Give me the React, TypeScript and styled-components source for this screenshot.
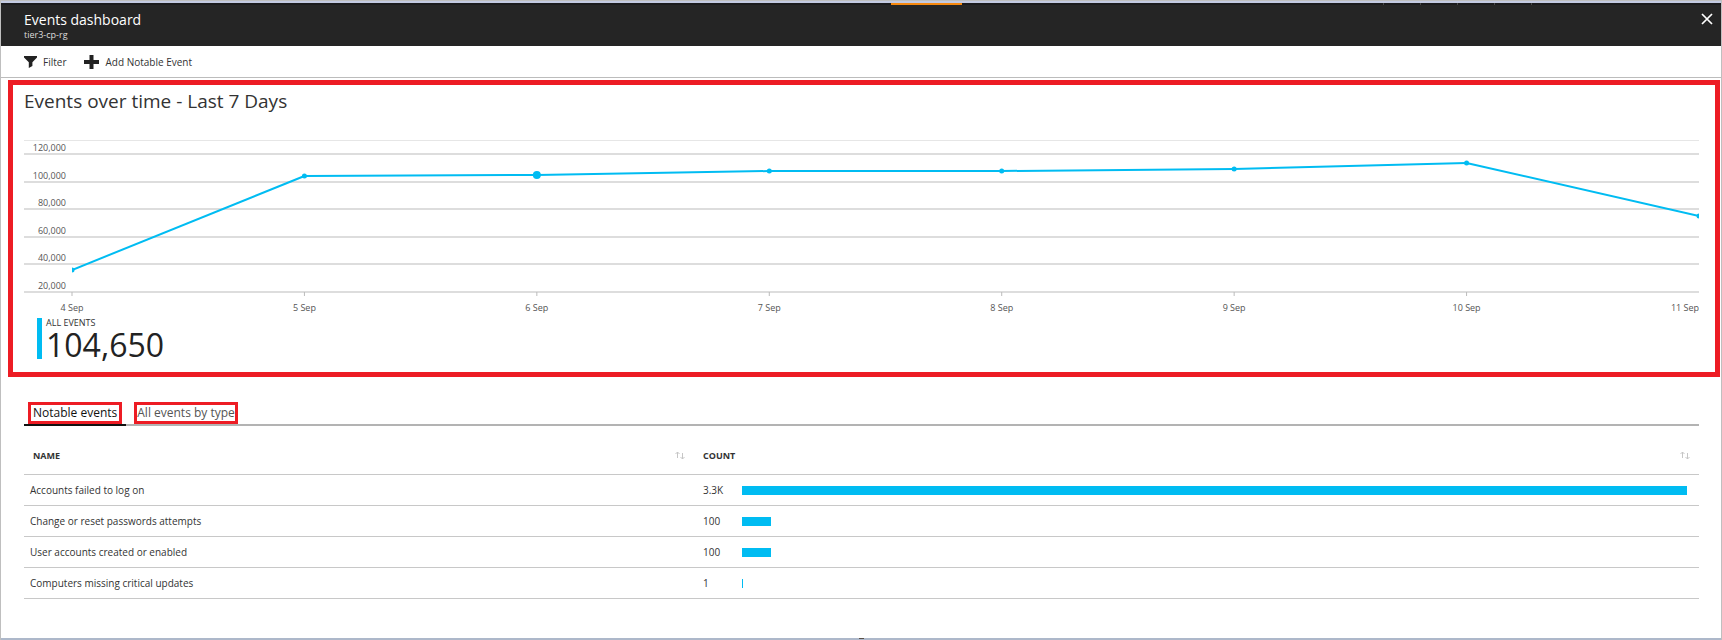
import React from "react";
import styled, { createGlobalStyle } from "styled-components";

const accent = "#00bcf2";
const red = "#ed1c24";
const rule = "#c8c8c8";

const GlobalStyle = createGlobalStyle`
  * { box-sizing: border-box; }
  body {
    margin: 0;
    background: #fff;
    color: #333;
    font-family: "Open Sans", "Noto Sans", sans-serif;
    font-size: 10px;
    line-height: 16px;
  }
  button {
    font: inherit;
    color: inherit;
    background: none;
    border: 0;
    padding: 0;
    cursor: pointer;
  }
`;

const Blade = styled.div`
  min-height: 100vh;
  display: flex;
  flex-direction: column;
  border: solid #bfbfbf;
  border-width: 1px 1px 0;
`;

const TopEdge = styled.div`
  height: 4px;
  display: grid;
  grid-template-columns: 890fr 71fr 421fr 37fr 37fr 37fr 37fr 190fr;
  border-top: 2px solid #c3cae2;
  background: #1b1b1d;
`;

const EdgeMark = styled.span<{ $active?: boolean }>`
  background: ${(p) => (p.$active ? "#f7890f" : "transparent")};
  border-left: ${(p) => (p.$active ? "0" : "1px solid #4a4a4a")};
`;

const Header = styled.header`
  display: flex;
  justify-content: space-between;
  align-items: flex-start;
  height: 41px;
  padding: 5px 8px 0 23px;
  background: #252525;
  color: #fff;
`;

const HeaderTitle = styled.h1`
  margin: 0;
  font-size: 14px;
  line-height: 20px;
  font-weight: 400;
`;

const HeaderSubtitle = styled.p`
  margin: 0;
  font-size: 9px;
  line-height: 10px;
  color: #ddd;
`;

const CloseButton = styled.button`
  display: flex;
  padding: 3px 0;
`;

const CommandBar = styled.nav`
  display: flex;
  align-items: center;
  gap: 18px;
  height: 32px;
  padding-left: 23px;
  border-bottom: 1px solid #bcbcbc;
`;

const Command = styled.button`
  display: flex;
  align-items: center;
  gap: 6px;
`;

const ChartPanel = styled.section`
  margin: 2px 1px 0 7px;
  padding: 2px 16px 13px 11px;
  border: 5px solid ${red};
`;

const ChartTitle = styled.h2`
  margin: 0;
  font-size: 19px;
  line-height: 28px;
  font-weight: 400;
`;

const ChartSvg = styled.svg`
  display: block;
  width: 100%;
  height: 178px;
  margin-top: 25px;
  text {
    font-size: 9px;
    fill: #555;
  }
`;

const Plot = styled.svg<{ $clip?: boolean }>`
  width: calc(100% - 48px);
  overflow: ${(p) => (p.$clip ? "hidden" : "visible")};
`;

const Metric = styled.div`
  margin: 0 0 0 13px;
  padding-left: 4px;
  height: 41px;
  border-left: 5px solid ${accent};
`;

const MetricLabel = styled.div`
  font-size: 9px;
  line-height: 10px;
`;

const MetricValue = styled.div`
  font-size: 32px;
  line-height: 34px;
  font-weight: 500;
  color: #222;
`;

const Details = styled.section`
  margin: 25px 22px 0 23px;
  flex: 1;
`;

const TabList = styled.div`
  display: flex;
  border-bottom: 2px solid #b3b3b3;
`;

const Tab = styled.button<{ $selected?: boolean }>`
  padding: 0 4px;
  margin: 0 4px -2px 0;
  border-bottom: 2px solid ${(p) => (p.$selected ? "#111" : "transparent")};
  color: ${(p) => (p.$selected ? "#111" : "#555")};
  font-size: 12px;
`;

const TabLabel = styled.span<{ $tight?: boolean }>`
  display: block;
  padding: 0 ${(p) => (p.$tight ? 0 : 2)}px;
  border: 3px solid ${red};
`;

const Table = styled.table`
  width: 100%;
  border-collapse: collapse;
  table-layout: fixed;
`;

const HeadCell = styled.th<{ $width?: string }>`
  width: ${(p) => p.$width ?? "auto"};
  height: 48px;
  padding: 12px 9px 0 9px;
  border-bottom: 1px solid ${rule};
  font-size: 9px;
  font-weight: 700;
  text-align: left;
`;

const HeadContent = styled.span`
  display: flex;
  justify-content: space-between;
  align-items: center;
`;

const NameCell = styled.td`
  height: 31px;
  padding: 0 6px;
  border-bottom: 1px solid ${rule};
`;

const CountCell = styled.td`
  padding: 0 12px 0 9px;
  border-bottom: 1px solid ${rule};
`;

const CountContent = styled.div`
  display: grid;
  grid-template-columns: 39px 1fr;
  align-items: center;
`;

const Bar = styled.div`
  height: 9px;
  margin-top: 2px;
  min-width: 1px;
  background: ${accent};
`;

const BottomEdge = styled.div`
  display: flex;
  justify-content: center;
  height: 2px;
  background: #adb8ca;
`;

const Grip = styled.span`
  width: 5px;
  height: 1px;
  background: #5a5048;
`;

const gridLines = [
  { y: 14, label: "120,000" },
  { y: 42, label: "100,000" },
  { y: 69, label: "80,000" },
  { y: 97, label: "60,000" },
  { y: 124, label: "40,000" },
  { y: 152, label: "20,000" },
];

const points = [
  { day: "4 Sep", y: 130 },
  { day: "5 Sep", y: 36 },
  { day: "6 Sep", y: 35, active: true },
  { day: "7 Sep", y: 31 },
  { day: "8 Sep", y: 31 },
  { day: "9 Sep", y: 29 },
  { day: "10 Sep", y: 23 },
  { day: "11 Sep", y: 76 },
];

const rows = [
  { name: "Accounts failed to log on", count: "3.3K", value: 3300 },
  { name: "Change or reset passwords attempts", count: "100", value: 100 },
  { name: "User accounts created or enabled", count: "100", value: 100 },
  { name: "Computers missing critical updates", count: "1", value: 1 },
];

const position = (i: number) => `${(i * 100) / (points.length - 1)}%`;

const FilterIcon = () => (
  <svg width="13" height="12" viewBox="0 0 13 12" aria-hidden="true">
    <path d="M0 0h13v1.500L8.400 6.200V10L4.800 12V6.200L0 1.500z" fill="#222" />
  </svg>
);

const AddIcon = () => (
  <svg width="15" height="14" viewBox="0 0 15 14" aria-hidden="true">
    <path d="M5.500 0h4v5H15v4H9.500v5h-4V9H0V5h5.500z" fill="#222" />
  </svg>
);

const CloseIcon = () => (
  <svg width="12" height="12" viewBox="0 0 12 12" aria-hidden="true">
    <path d="M1 1l10 10M11 1L1 11" stroke="#fff" strokeWidth="1.700" />
  </svg>
);

const SortIcon = () => (
  <svg width="10" height="9" viewBox="0 0 10 9" aria-hidden="true">
    <path
      d="M2.500 7V1M.5 3l2-2 2 2M7.500 2v6M5.500 6l2 2 2-2"
      fill="none"
      stroke="#c6c6c6"
    />
  </svg>
);

const EventsChart = () => (
  <ChartSvg role="img" aria-label="Events per day, 4 Sep to 11 Sep">
    <line x1="0" x2="100%" y1="0.500" y2="0.500" stroke="#e6e6e6" />
    {gridLines.map((g) => (
      <React.Fragment key={g.label}>
        <line x1="0" x2="100%" y1={g.y} y2={g.y} stroke="#bbb" />
        <text x="42" y={g.y - 3} textAnchor="end">
          {g.label}
        </text>
      </React.Fragment>
    ))}
    <Plot x="48">
      {points.map((p, i) => {
        const last = i === points.length - 1;
        return (
          <React.Fragment key={p.day}>
            {!last && (
              <line
                x1={position(i)}
                x2={position(i)}
                y1="152"
                y2="156"
                stroke="#bbb"
              />
            )}
            <text
              x={position(i)}
              y="171"
              textAnchor={last ? "end" : "middle"}
            >
              {p.day}
            </text>
          </React.Fragment>
        );
      })}
    </Plot>
    <Plot x="48" $clip>
      {points.slice(1).map((p, i) => (
        <line
          key={p.day}
          x1={position(i)}
          y1={points[i].y}
          x2={position(i + 1)}
          y2={p.y}
          stroke={accent}
          strokeWidth="2"
        />
      ))}
      {points.map((p, i) => (
        <circle
          key={p.day}
          cx={position(i)}
          cy={p.y}
          r={p.active ? 4 : 2.5}
          fill={accent}
        />
      ))}
    </Plot>
  </ChartSvg>
);

const EventsTable = () => {
  const max = Math.max(...rows.map((r) => r.value));
  return (
    <Table>
      <thead>
        <tr>
          <HeadCell scope="col" $width="40%">
            <HeadContent>
              NAME <SortIcon />
            </HeadContent>
          </HeadCell>
          <HeadCell scope="col">
            <HeadContent>
              COUNT <SortIcon />
            </HeadContent>
          </HeadCell>
        </tr>
      </thead>
      <tbody>
        {rows.map((r) => (
          <tr key={r.name}>
            <NameCell>{r.name}</NameCell>
            <CountCell>
              <CountContent>
                {r.count}
                <Bar style={{ width: `${(r.value / max) * 100}%` }} />
              </CountContent>
            </CountCell>
          </tr>
        ))}
      </tbody>
    </Table>
  );
};

export default function App() {
  return (
    <>
      <GlobalStyle />
      <Blade>
        <TopEdge>
          <span />
          <EdgeMark $active />
          <span />
          <EdgeMark />
          <EdgeMark />
          <EdgeMark />
          <EdgeMark />
          <EdgeMark />
        </TopEdge>
        <Header>
          <div>
            <HeaderTitle>Events dashboard</HeaderTitle>
            <HeaderSubtitle>tier3-cp-rg</HeaderSubtitle>
          </div>
          <CloseButton aria-label="Close">
            <CloseIcon />
          </CloseButton>
        </Header>
        <CommandBar>
          <Command>
            <FilterIcon />
            Filter
          </Command>
          <Command>
            <AddIcon />
            Add Notable Event
          </Command>
        </CommandBar>
        <ChartPanel>
          <ChartTitle>Events over time - Last 7 Days</ChartTitle>
          <EventsChart />
          <Metric>
            <MetricLabel>ALL EVENTS</MetricLabel>
            <MetricValue>104,650</MetricValue>
          </Metric>
        </ChartPanel>
        <Details>
          <TabList role="tablist">
            <Tab role="tab" aria-selected="true" $selected>
              <TabLabel>Notable events</TabLabel>
            </Tab>
            <Tab role="tab" aria-selected="false">
              <TabLabel $tight>All events by type</TabLabel>
            </Tab>
          </TabList>
          <EventsTable />
        </Details>
        <BottomEdge>
          <Grip />
        </BottomEdge>
      </Blade>
    </>
  );
}
